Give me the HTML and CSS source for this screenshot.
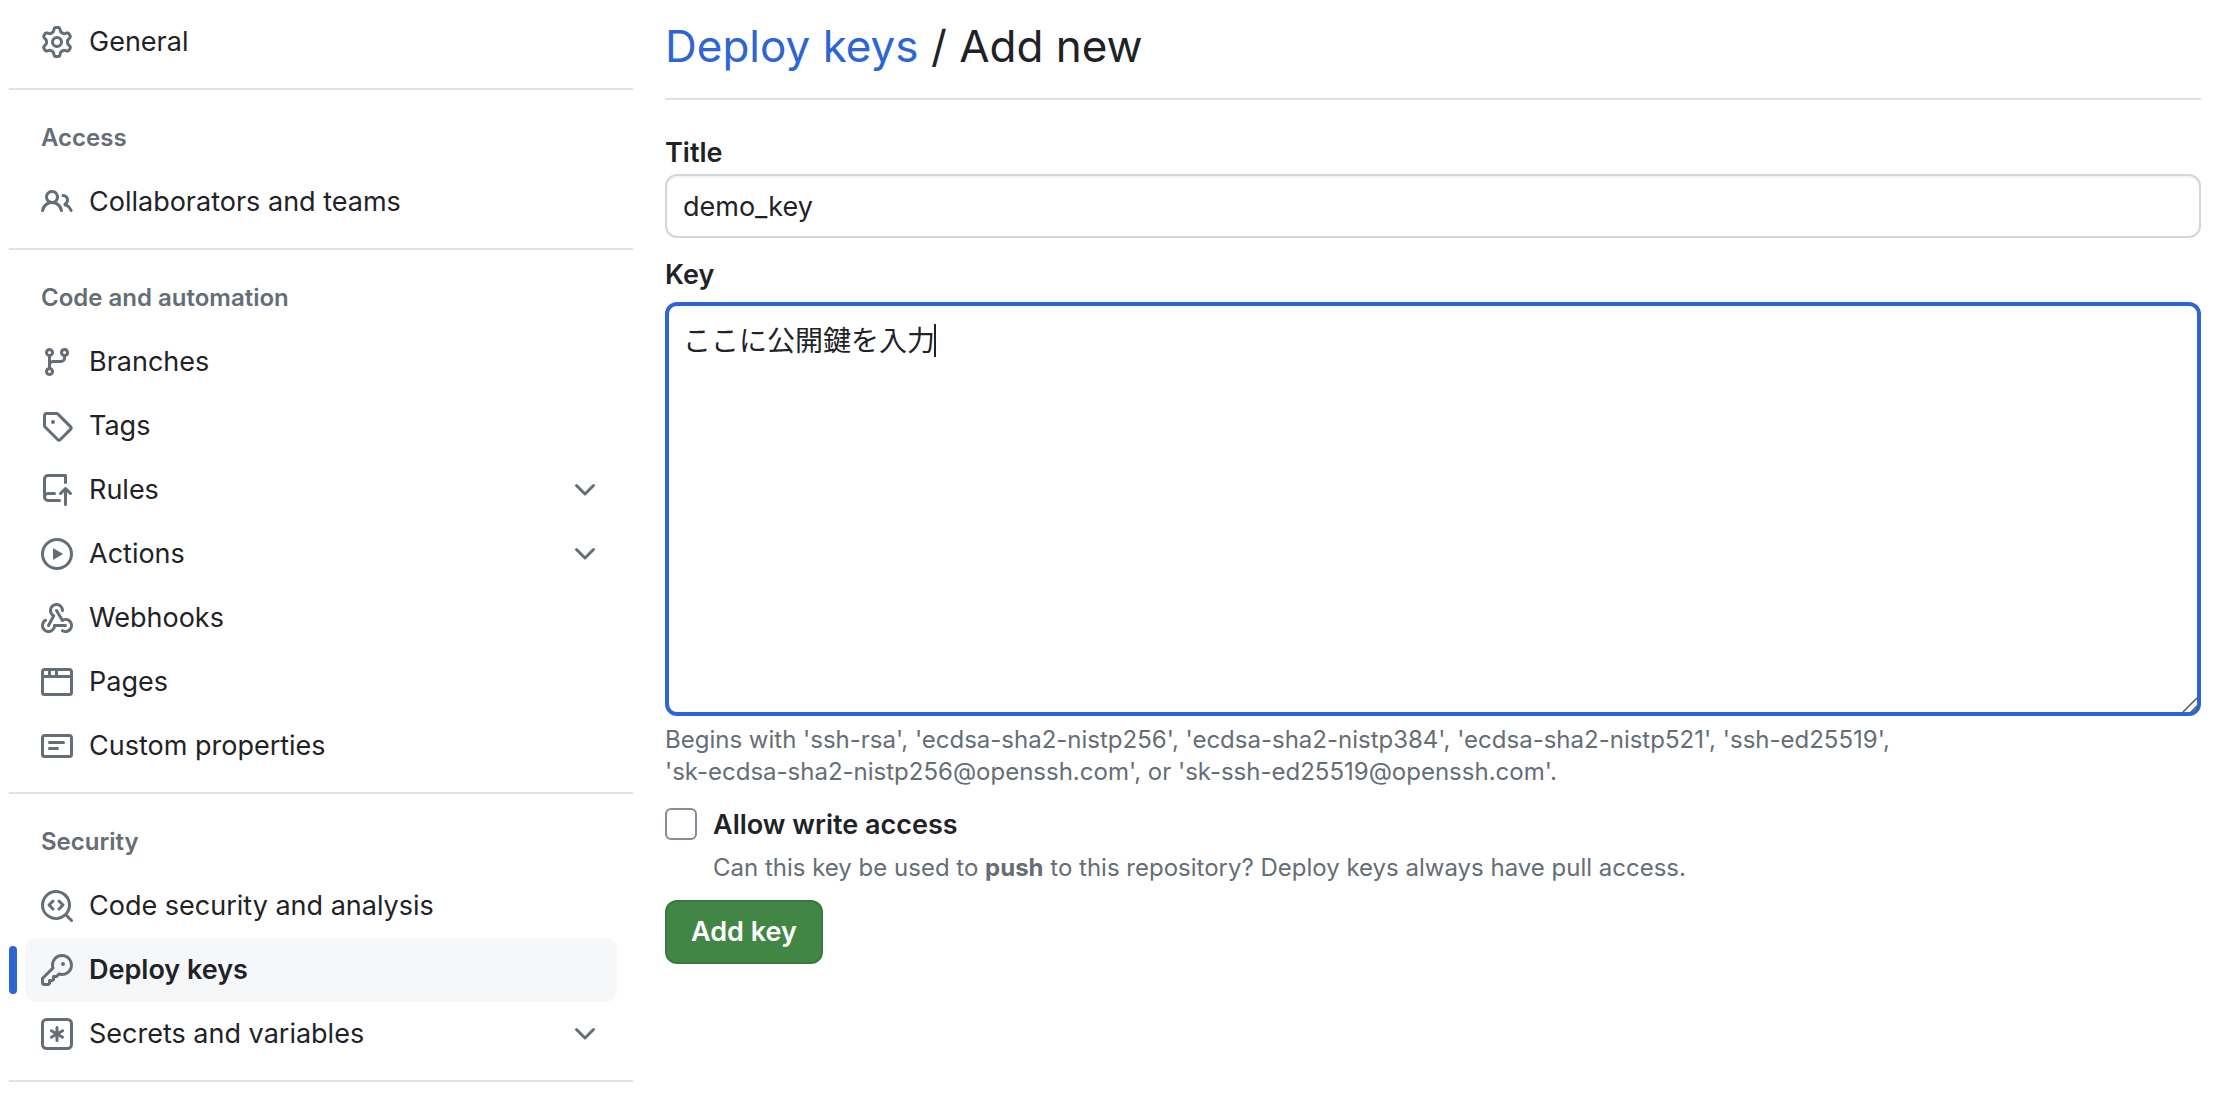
FILE: index.html
```html
<!DOCTYPE html>
<html lang="en">
<head>
    <meta charset="UTF-8">
    <meta name="viewport" content="width=device-width, initial-scale=1.0">
    <title>Deploy keys / Add new</title>
    <link rel="stylesheet" href="styles.css">
</head>
<body>
    <div class="layout">
        <nav class="sidebar" aria-label="Repository settings">
            <ul class="nav-list">
                <li>
                    <a class="nav-item" href="#general">
                        <svg class="icon" viewBox="0 0 16 16"><path d="M8 0a8.2 8.2 0 0 1 .701.031C9.444.095 9.99.645 10.16 1.29l.288 1.107c.018.066.079.158.212.224.231.114.454.243.668.386.123.082.233.09.299.071l1.103-.303c.644-.176 1.392.021 1.82.63.27.385.506.792.704 1.218.315.675.111 1.422-.364 1.891l-.814.806c-.049.048-.098.147-.088.294.016.257.016.515 0 .772-.01.147.038.246.088.294l.814.806c.475.469.679 1.216.364 1.891a7.977 7.977 0 0 1-.704 1.217c-.428.61-1.176.807-1.82.63l-1.102-.302c-.067-.019-.177-.011-.3.071a5.909 5.909 0 0 1-.668.386c-.133.066-.194.158-.211.224l-.29 1.106c-.168.646-.715 1.196-1.458 1.26a8.006 8.006 0 0 1-1.402 0c-.743-.064-1.289-.614-1.458-1.26l-.289-1.106c-.018-.066-.079-.158-.212-.224a5.738 5.738 0 0 1-.668-.386c-.123-.082-.233-.09-.299-.071l-1.103.303c-.644.176-1.392-.021-1.82-.63a8.12 8.12 0 0 1-.704-1.218c-.315-.675-.111-1.422.363-1.891l.815-.806c.05-.048.098-.147.088-.294a6.214 6.214 0 0 1 0-.772c.01-.147-.038-.246-.088-.294l-.815-.806C.635 6.045.431 5.298.746 4.623a7.92 7.92 0 0 1 .704-1.217c.428-.61 1.176-.807 1.82-.63l1.102.302c.067.019.177.011.3-.071.214-.143.437-.272.668-.386.133-.066.194-.158.211-.224l.29-1.106C6.009.645 6.556.095 7.299.03 7.53.01 7.764 0 8 0Zm-.571 1.525c-.036.003-.108.036-.137.146l-.289 1.105c-.147.561-.549.967-.998 1.189-.173.086-.34.183-.5.29-.417.278-.97.423-1.529.27l-1.103-.303c-.109-.03-.175.016-.195.045-.22.312-.412.644-.573.99-.014.031-.021.11.059.19l.815.806c.411.406.562.957.53 1.456a4.709 4.709 0 0 0 0 .582c.032.499-.119 1.05-.53 1.456l-.815.806c-.081.08-.073.159-.059.19.162.346.353.677.573.989.02.03.085.076.195.046l1.102-.303c.56-.153 1.113-.008 1.53.27.161.107.328.204.501.29.447.222.85.629.997 1.189l.289 1.105c.029.109.101.143.137.146a6.6 6.6 0 0 0 1.142 0c.036-.003.108-.036.137-.146l.289-1.105c.147-.561.549-.967.998-1.189.173-.086.34-.183.5-.29.417-.278.97-.423 1.529-.27l1.103.303c.109.029.175-.016.195-.045.22-.313.411-.644.573-.99.014-.031.021-.11-.059-.19l-.815-.806c-.411-.406-.562-.957-.53-1.456a4.709 4.709 0 0 0 0-.582c-.032-.499.119-1.05.53-1.456l.815-.806c.081-.08.073-.159.059-.19a6.464 6.464 0 0 0-.573-.989c-.02-.03-.085-.076-.195-.046l-1.102.303c-.56.153-1.113.008-1.53-.27a4.44 4.44 0 0 0-.501-.29c-.447-.222-.85-.629-.997-1.189l-.289-1.105c-.029-.11-.101-.143-.137-.146a6.6 6.6 0 0 0-1.142 0ZM11 8a3 3 0 1 1-6 0 3 3 0 0 1 6 0ZM9.5 8a1.5 1.5 0 1 0-3.001.001A1.5 1.5 0 0 0 9.5 8Z"/></svg>
                        <span>General</span>
                    </a>
                </li>
            </ul>

            <h2 class="nav-heading">Access</h2>
            <ul class="nav-list">
                <li>
                    <a class="nav-item" href="#collaborators">
                        <svg class="icon" viewBox="0 0 16 16"><path d="M2 5.5a3.5 3.5 0 1 1 5.898 2.549 5.508 5.508 0 0 1 3.034 4.084.75.75 0 1 1-1.482.235 4 4 0 0 0-7.9 0 .75.75 0 0 1-1.482-.236A5.507 5.507 0 0 1 3.102 8.05 3.493 3.493 0 0 1 2 5.5ZM11 4a3.001 3.001 0 0 1 2.22 5.018 5.01 5.01 0 0 1 2.56 3.012.749.749 0 0 1-.885.954.752.752 0 0 1-.549-.514 3.507 3.507 0 0 0-2.522-2.372.75.75 0 0 1-.574-.73v-.352a.75.75 0 0 1 .416-.672A1.5 1.5 0 0 0 11 5.5.75.75 0 0 1 11 4Zm-5.5-.5a2 2 0 1 0-.001 3.999A2 2 0 0 0 5.5 3.5Z"/></svg>
                        <span>Collaborators and teams</span>
                    </a>
                </li>
            </ul>

            <h2 class="nav-heading">Code and automation</h2>
            <ul class="nav-list">
                <li>
                    <a class="nav-item" href="#branches">
                        <svg class="icon" viewBox="0 0 16 16"><path d="M9.5 3.25a2.25 2.25 0 1 1 3 2.122V6A2.5 2.5 0 0 1 10 8.5H6a1 1 0 0 0-1 1v1.128a2.251 2.251 0 1 1-1.5 0V5.372a2.25 2.25 0 1 1 1.5 0v1.836A2.493 2.493 0 0 1 6 7h4a1 1 0 0 0 1-1v-.628A2.25 2.25 0 0 1 9.5 3.25Zm-6 0a.75.75 0 1 0 1.5 0 .75.75 0 0 0-1.5 0Zm8.25-.75a.75.75 0 1 0 0 1.5.75.75 0 0 0 0-1.5ZM4.25 12a.75.75 0 1 0 0 1.5.75.75 0 0 0 0-1.5Z"/></svg>
                        <span>Branches</span>
                    </a>
                </li>
                <li>
                    <a class="nav-item" href="#tags">
                        <svg class="icon" viewBox="0 0 16 16"><path d="M1 7.775V2.75C1 1.784 1.784 1 2.75 1h5.025c.464 0 .91.184 1.238.513l6.25 6.25a1.75 1.75 0 0 1 0 2.474l-5.026 5.026a1.75 1.75 0 0 1-2.474 0l-6.25-6.25A1.752 1.752 0 0 1 1 7.775Zm1.5 0c0 .066.026.13.073.177l6.25 6.25a.25.25 0 0 0 .354 0l5.025-5.025a.25.25 0 0 0 0-.354l-6.25-6.25a.25.25 0 0 0-.177-.073H2.75a.25.25 0 0 0-.25.25ZM6 5a1 1 0 1 1 0 2 1 1 0 0 1 0-2Z"/></svg>
                        <span>Tags</span>
                    </a>
                </li>
                <li>
                    <button class="nav-item" type="button" aria-expanded="false">
                        <svg class="icon" viewBox="0 0 16 16"><path d="M1 2.5A2.5 2.5 0 0 1 3.5 0h8.75a.75.75 0 0 1 .75.75v3.5a.75.75 0 0 1-1.5 0V1.5h-8a1 1 0 0 0-1 1v6.708A2.493 2.493 0 0 1 3.5 9h3.25a.75.75 0 0 1 0 1.5H3.5a1 1 0 0 0 0 2h5.75a.75.75 0 0 1 0 1.5H3.5A2.5 2.5 0 0 1 1 11.5Zm13.23 7.79h-.001l-1.224-1.224v6.184a.75.75 0 0 1-1.5 0V9.066L10.28 10.29a.75.75 0 0 1-1.06-1.061l2.505-2.504a.75.75 0 0 1 1.06 0L15.29 9.23a.751.751 0 0 1-.018 1.042.751.751 0 0 1-1.042.018Z"/></svg>
                        <span>Rules</span>
                        <svg class="icon chevron" viewBox="0 0 16 16"><path d="M12.78 5.22a.749.749 0 0 1 0 1.06l-4.25 4.25a.749.749 0 0 1-1.06 0L3.22 6.28a.749.749 0 1 1 1.06-1.06L8 8.939l3.72-3.719a.749.749 0 0 1 1.06 0Z"/></svg>
                    </button>
                </li>
                <li>
                    <button class="nav-item" type="button" aria-expanded="false">
                        <svg class="icon" viewBox="0 0 16 16"><path d="M8 0a8 8 0 1 1 0 16A8 8 0 0 1 8 0ZM1.5 8a6.5 6.5 0 1 0 13 0 6.5 6.5 0 0 0-13 0Zm4.879-2.773 4.264 2.559a.25.25 0 0 1 0 .428l-4.264 2.559A.25.25 0 0 1 6 10.559V5.442a.25.25 0 0 1 .379-.215Z"/></svg>
                        <span>Actions</span>
                        <svg class="icon chevron" viewBox="0 0 16 16"><path d="M12.78 5.22a.749.749 0 0 1 0 1.06l-4.25 4.25a.749.749 0 0 1-1.06 0L3.22 6.28a.749.749 0 1 1 1.06-1.06L8 8.939l3.72-3.719a.749.749 0 0 1 1.06 0Z"/></svg>
                    </button>
                </li>
                <li>
                    <a class="nav-item" href="#webhooks">
                        <svg class="icon" viewBox="0 0 16 16"><path d="M5.5 4.25a2.25 2.25 0 0 1 4.5 0 .75.75 0 0 0 1.5 0 3.75 3.75 0 1 0-6.14 2.889l-2.272 4.258a.75.75 0 0 0 1.324.706L7 7.25a.75.75 0 0 0-.309-1.015A2.25 2.25 0 0 1 5.5 4.25Z"/><path d="M7.364 3.607a.75.75 0 0 1 1.03.257l2.608 4.349a3.75 3.75 0 1 1-.628 6.785.75.75 0 0 1 .752-1.299 2.25 2.25 0 1 0-.033-3.88.75.75 0 0 1-1.03-.256L7.107 4.636a.75.75 0 0 1 .257-1.03Z"/><path d="M2.9 8.776A.75.75 0 0 1 2.625 9.8 2.25 2.25 0 1 0 6 11.75a.75.75 0 0 1 .75-.751h5.5a.75.75 0 0 1 0 1.5H7.425a3.751 3.751 0 1 1-5.55-3.998.75.75 0 0 1 1.024.274Z"/></svg>
                        <span>Webhooks</span>
                    </a>
                </li>
                <li>
                    <a class="nav-item" href="#pages">
                        <svg class="icon" viewBox="0 0 16 16"><path d="M0 2.75C0 1.784.784 1 1.75 1h12.5c.966 0 1.75.784 1.75 1.75v10.5A1.75 1.75 0 0 1 14.25 15H1.75A1.75 1.75 0 0 1 0 13.25ZM14.5 6h-13v7.25c0 .138.112.25.25.25h12.5a.25.25 0 0 0 .25-.25Zm-6-3.5v2h6V2.75a.25.25 0 0 0-.25-.25ZM5 2.5v2h2v-2Zm-3.25 0a.25.25 0 0 0-.25.25V4.5h2v-2Z"/></svg>
                        <span>Pages</span>
                    </a>
                </li>
                <li>
                    <a class="nav-item" href="#custom-properties">
                        <svg class="icon" viewBox="0 0 16 16"><path d="M0 3.75C0 2.784.784 2 1.75 2h12.5c.966 0 1.75.784 1.75 1.75v8.5A1.75 1.75 0 0 1 14.25 14H1.75A1.75 1.75 0 0 1 0 12.25Zm1.75-.25a.25.25 0 0 0-.25.25v8.5c0 .138.112.25.25.25h12.5a.25.25 0 0 0 .25-.25v-8.5a.25.25 0 0 0-.25-.25ZM3.5 6.25a.75.75 0 0 1 .75-.75h7a.75.75 0 0 1 0 1.5h-7a.75.75 0 0 1-.75-.75Zm.75 2.25h4a.75.75 0 0 1 0 1.5h-4a.75.75 0 0 1 0-1.5Z"/></svg>
                        <span>Custom properties</span>
                    </a>
                </li>
            </ul>

            <h2 class="nav-heading">Security</h2>
            <ul class="nav-list">
                <li>
                    <a class="nav-item" href="#code-security">
                        <svg class="icon" viewBox="0 0 16 16"><path d="M8.47 4.97a.75.75 0 0 0 0 1.06L9.94 7.5 8.47 8.97a.75.75 0 1 0 1.06 1.06l2-2a.75.75 0 0 0 0-1.06l-2-2a.75.75 0 0 0-1.06 0ZM6.53 6.03a.75.75 0 0 0-1.06-1.06l-2 2a.75.75 0 0 0 0 1.06l2 2a.75.75 0 1 0 1.06-1.06L5.06 7.5l1.47-1.47Z"/><path d="M12.246 13.307a7.501 7.501 0 1 1 1.06-1.06l2.474 2.473a.749.749 0 1 1-1.06 1.06l-2.474-2.473ZM1.5 7.5a6.002 6.002 0 0 0 3.608 5.504 6.002 6.002 0 0 0 6.486-1.117.748.748 0 0 1 .292-.293A6 6 0 1 0 1.5 7.5Z"/></svg>
                        <span>Code security and analysis</span>
                    </a>
                </li>
                <li>
                    <a class="nav-item active" href="#deploy-keys" aria-current="page">
                        <svg class="icon" viewBox="0 0 16 16"><path d="M10.5 0a5.499 5.499 0 1 1-1.288 10.848l-.932.932a.749.749 0 0 1-.53.22H7v.75a.749.749 0 0 1-.22.53l-.5.5a.749.749 0 0 1-.53.22H5v.75a.749.749 0 0 1-.22.53l-.5.5a.749.749 0 0 1-.53.22h-2A1.75 1.75 0 0 1 0 14.25v-2c0-.199.079-.389.22-.53l4.932-4.932A5.5 5.5 0 0 1 10.5 0Zm-4 5.5c-.001.431.069.86.205 1.269a.75.75 0 0 1-.181.768L1.5 12.56v1.69c0 .138.112.25.25.25h1.69l.06-.06v-1.19a.75.75 0 0 1 .75-.75h1.19l.06-.06v-1.19a.75.75 0 0 1 .75-.75h1.19l1.023-1.025a.75.75 0 0 1 .768-.18A4 4 0 1 0 6.5 5.5ZM11 6a1 1 0 1 1 0-2 1 1 0 0 1 0 2Z"/></svg>
                        <span>Deploy keys</span>
                    </a>
                </li>
                <li>
                    <button class="nav-item" type="button" aria-expanded="false">
                        <svg class="icon" viewBox="0 0 16 16"><path d="M0 2.75A2.75 2.75 0 0 1 2.75 0h10.5A2.75 2.75 0 0 1 16 2.75v10.5A2.75 2.75 0 0 1 13.25 16H2.75A2.75 2.75 0 0 1 0 13.25ZM2.75 1.5c-.69 0-1.25.56-1.25 1.25v10.5c0 .69.56 1.25 1.25 1.25h10.5c.69 0 1.25-.56 1.25-1.25V2.75c0-.69-.56-1.25-1.25-1.25Z"/><path d="M8 4a.75.75 0 0 1 .75.75V6.7l1.69-.975a.75.75 0 0 1 .75 1.3L9.5 8l1.69.976a.75.75 0 0 1-.75 1.298L8.75 9.3v1.951a.75.75 0 0 1-1.5 0V9.299l-1.69.976a.75.75 0 0 1-.75-1.3L6.5 8l-1.69-.975a.75.75 0 0 1 .75-1.3l1.69.976V4.75A.75.75 0 0 1 8 4Z"/></svg>
                        <span>Secrets and variables</span>
                        <svg class="icon chevron" viewBox="0 0 16 16"><path d="M12.78 5.22a.749.749 0 0 1 0 1.06l-4.25 4.25a.749.749 0 0 1-1.06 0L3.22 6.28a.749.749 0 1 1 1.06-1.06L8 8.939l3.72-3.719a.749.749 0 0 1 1.06 0Z"/></svg>
                    </button>
                </li>
            </ul>
        </nav>

        <main class="content">
            <h1 class="page-title"><a href="#deploy-keys">Deploy keys</a> / Add new</h1>

            <form class="key-form">
                <label class="field-label" for="keyTitle">Title</label>
                <input class="text-input" type="text" id="keyTitle" value="demo_key">

                <label class="field-label key-label" for="keyValue">Key</label>
                <div class="key-box">
                    <textarea class="key-input" id="keyValue" rows="9" lang="ja">ここに公開鍵を入力</textarea>
                    <span class="caret"></span>
                    <svg class="grip" viewBox="0 0 16 16"><path d="M1 15 15 1M9 15l6-6"/></svg>
                </div>
                <p class="note">Begins with 'ssh-rsa', 'ecdsa-sha2-nistp256', 'ecdsa-sha2-nistp384', 'ecdsa-sha2-nistp521', 'ssh-ed25519',<br>'sk-ecdsa-sha2-nistp256@openssh.com', or 'sk-ssh-ed25519@openssh.com'.</p>

                <div class="write-access">
                    <input type="checkbox" id="writeAccess">
                    <div>
                        <label for="writeAccess">Allow write access</label>
                        <p class="note">Can this key be used to <strong>push</strong> to this repository? Deploy keys always have pull access.</p>
                    </div>
                </div>

                <button class="submit-btn" type="button">Add key</button>
            </form>
        </main>
    </div>
</body>
</html>
```
FILE: styles.css
```css
* {
    margin: 0;
    padding: 0;
    box-sizing: border-box;
}

body {
    background-color: #fff;
    color: #1f2328;
    font-family: Inter, "Noto Sans CJK JP", sans-serif;
    font-size: 27px;
    line-height: 42px;
}

input,
textarea,
button {
    font: inherit;
    color: inherit;
}

.layout {
    display: flex;
    gap: 32px;
    padding: 10px 35px 0 9px;
}

/* Sidebar */
.sidebar {
    flex: 0 0 624px;
}

.nav-list {
    list-style: none;
    padding: 0 16px 14px;
    border-bottom: 2px solid #dde2e7;
}

.nav-heading {
    padding: 0 32px;
    margin-top: 16px;
    font-size: 24px;
    font-weight: 600;
    line-height: 64px;
    color: #656d76;
}

.nav-item {
    position: relative;
    display: flex;
    align-items: center;
    gap: 16px;
    width: 100%;
    height: 64px;
    padding: 0 16px;
    border: none;
    border-radius: 12px;
    background: none;
    color: #1f2328;
    text-align: left;
    text-decoration: none;
    cursor: pointer;
}

.nav-item.active {
    background-color: #f5f7f9;
    font-weight: 600;
}

.nav-item.active::before {
    content: "";
    position: absolute;
    top: 8px;
    left: -16px;
    width: 8px;
    height: 48px;
    border-radius: 6px;
    background-color: #2d65d5;
}

.icon {
    flex: none;
    width: 32px;
    height: 32px;
    fill: #656d76;
}

.chevron {
    margin-left: auto;
}

/* Main form */
.content {
    flex: 1;
    min-width: 0;
}

.page-title {
    padding-bottom: 16px;
    border-bottom: 2px solid #dde2e7;
    font-size: 44px;
    font-weight: 400;
    line-height: 72px;
}

.page-title a {
    color: #2d65d5;
    text-decoration: none;
}

.key-form {
    padding-top: 32px;
}

.field-label {
    display: block;
    font-weight: 600;
}

.text-input {
    display: block;
    width: 100%;
    height: 64px;
    padding: 0 16px;
    border: 2px solid #d0d7de;
    border-radius: 12px;
    box-shadow: inset 0 2px 0 #f4f5f7;
}

.key-label {
    margin: 16px 0 6px;
}

.key-box {
    position: relative;
}

.key-input {
    display: block;
    width: 100%;
    padding: 14px;
    border: 4px solid #2d65d5;
    border-radius: 12px;
    outline: none;
    resize: none;
    font-size: 28px;
}

.caret {
    position: absolute;
    top: 22px;
    left: 269px;
    width: 2px;
    height: 33px;
    background-color: #1f2328;
}

.grip {
    position: absolute;
    right: 3px;
    bottom: 3px;
    width: 16px;
    height: 16px;
    fill: none;
    stroke: #555;
    stroke-width: 1.5;
}

.note {
    font-size: 24px;
    line-height: 32px;
    color: #656d76;
}

.key-box + .note {
    padding-top: 8px;
}

.write-access {
    display: flex;
    gap: 16px;
    margin-top: 16px;
}

.write-access input {
    flex: none;
    width: 32px;
    height: 32px;
    margin-top: 4px;
    appearance: none;
    border: 2px solid #868c98;
    border-radius: 6px;
    background-color: #fff;
}

.write-access label {
    font-weight: 600;
}

.write-access .note {
    margin-top: 6px;
}

.submit-btn {
    height: 64px;
    margin-top: 16px;
    padding: 0 24px;
    border: 2px solid #3b783f;
    border-radius: 12px;
    background-color: #428646;
    color: #fff;
    font-weight: 600;
    cursor: pointer;
}
```
